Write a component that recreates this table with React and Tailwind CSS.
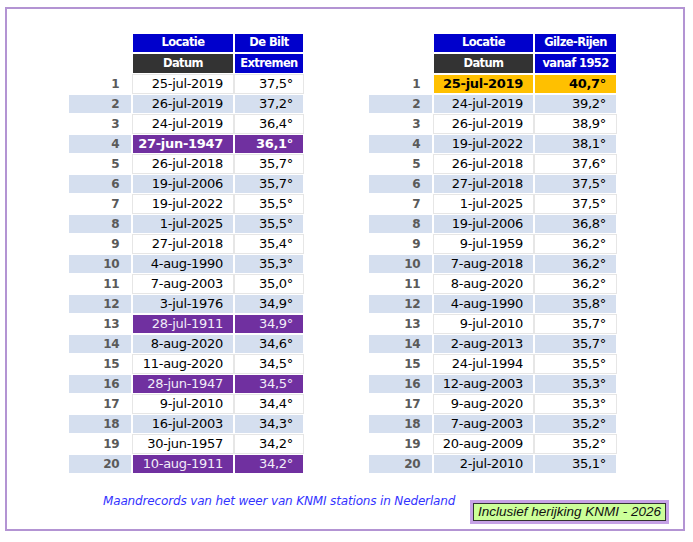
import React from "react";

const left = [
  ["25-jul-2019", "37,5°"],
  ["26-jul-2019", "37,2°"],
  ["24-jul-2019", "36,4°"],
  ["27-jun-1947", "36,1°", "pb"],
  ["26-jul-2018", "35,7°"],
  ["19-jul-2006", "35,7°"],
  ["19-jul-2022", "35,5°"],
  ["1-jul-2025", "35,5°"],
  ["27-jul-2018", "35,4°"],
  ["4-aug-1990", "35,3°"],
  ["7-aug-2003", "35,0°"],
  ["3-jul-1976", "34,9°"],
  ["28-jul-1911", "34,9°", "p"],
  ["8-aug-2020", "34,6°"],
  ["11-aug-2020", "34,5°"],
  ["28-jun-1947", "34,5°", "p"],
  ["9-jul-2010", "34,4°"],
  ["16-jul-2003", "34,3°"],
  ["30-jun-1957", "34,2°"],
  ["10-aug-1911", "34,2°", "p"],
];

const right = [
  ["25-jul-2019", "40,7°", "o"],
  ["24-jul-2019", "39,2°"],
  ["26-jul-2019", "38,9°"],
  ["19-jul-2022", "38,1°"],
  ["26-jul-2018", "37,6°"],
  ["27-jul-2018", "37,5°"],
  ["1-jul-2025", "37,5°"],
  ["19-jul-2006", "36,8°"],
  ["9-jul-1959", "36,2°"],
  ["7-aug-2018", "36,2°"],
  ["8-aug-2020", "36,2°"],
  ["4-aug-1990", "35,8°"],
  ["9-jul-2010", "35,7°"],
  ["2-aug-2013", "35,7°"],
  ["24-jul-1994", "35,5°"],
  ["12-aug-2003", "35,3°"],
  ["9-aug-2020", "35,3°"],
  ["7-aug-2003", "35,2°"],
  ["20-aug-2009", "35,2°"],
  ["2-jul-2010", "35,1°"],
];

function cellClass(kind, even) {
  if (kind === "pb") return "bg-[#7030a0] border-white text-white font-bold";
  if (kind === "p") return "bg-[#7030a0] border-white text-[#f2ecf8]";
  if (kind === "o") return "bg-[#ffc000] border-white text-black font-bold";
  if (even) return "bg-[#d5dfef] border-white text-black";
  return "bg-white border-[#e6e6e6] text-black";
}

const head =
  "border border-white text-white font-bold flex items-center justify-center text-[11.5px] tracking-[-0.6px]";

function Table({ rows, w, station, sub }) {
  return (
    <div className="flex flex-col">
      <div className="flex h-[20px]">
        <div style={{ width: w[0] }} />
        <div style={{ width: w[1] }} className={`${head} bg-[#0000cc]`}>
          Locatie
        </div>
        <div style={{ width: w[2] }} className={`${head} bg-[#0000cc]`}>
          {station}
        </div>
      </div>
      <div className="flex h-[21px]">
        <div style={{ width: w[0] }} />
        <div style={{ width: w[1] }} className={`${head} bg-[#333333]`}>
          Datum
        </div>
        <div style={{ width: w[2] }} className={`${head} bg-[#0000cc]`}>
          {sub}
        </div>
      </div>
      {rows.map((r, i) => {
        const even = i % 2 === 1;
        const cc = cellClass(r[2], even);
        return (
          <div key={i} className="flex h-[20px]">
            <div
              style={{ width: w[0] }}
              className={`border border-white flex items-center justify-end pr-[12px] font-bold text-[12px] tracking-[-0.5px] text-[#5a5a5a] ${
                even ? "bg-[#d5dfef]" : "bg-white"
              }`}
            >
              {i + 1}
            </div>
            <div
              style={{ width: w[1] }}
              className={`border flex items-center justify-end pr-[10px] ${cc}`}
            >
              {r[0]}
            </div>
            <div
              style={{ width: w[2] }}
              className={`border flex items-center justify-end pr-[10px] ${cc}`}
            >
              {r[1]}
            </div>
          </div>
        );
      })}
    </div>
  );
}

export default function App() {
  return (
    <div className="w-[693px] h-[542px] bg-white pt-[7px] pl-[5px] font-['DejaVu_Sans',sans-serif] text-[13px] tracking-[-0.3px]">
      <div className="w-[680px] h-[524px] border-2 border-[#b394d3] flex flex-col">
        <div className="flex pt-[24px] pl-[61px]">
          <Table rows={left} w={[64, 102, 70]} station="De Bilt" sub="Extremen" />
          <div className="w-[64px]" />
          <Table rows={right} w={[65, 101, 83]} station="Gilze-Rijen" sub="vanaf 1952" />
        </div>
        <div className="flex mt-[17px] pl-[96px]">
          <div className="w-[367px] leading-[20px] italic text-[#3333ff] text-[12px] tracking-[-0.15px] whitespace-nowrap">
            Maandrecords van het weer van KNMI stations in Nederland
          </div>
          <div className="mt-[9px] border-[3px] border-[#c6a2e6]">
            <div className="border border-[#333] bg-[#ccff99] h-[18px] w-[193px] flex items-center justify-center font-['Liberation_Sans',sans-serif] italic text-[13.5px] tracking-normal text-[#111]">
              Inclusief herijking KNMI - 2026
            </div>
          </div>
        </div>
      </div>
    </div>
  );
}
